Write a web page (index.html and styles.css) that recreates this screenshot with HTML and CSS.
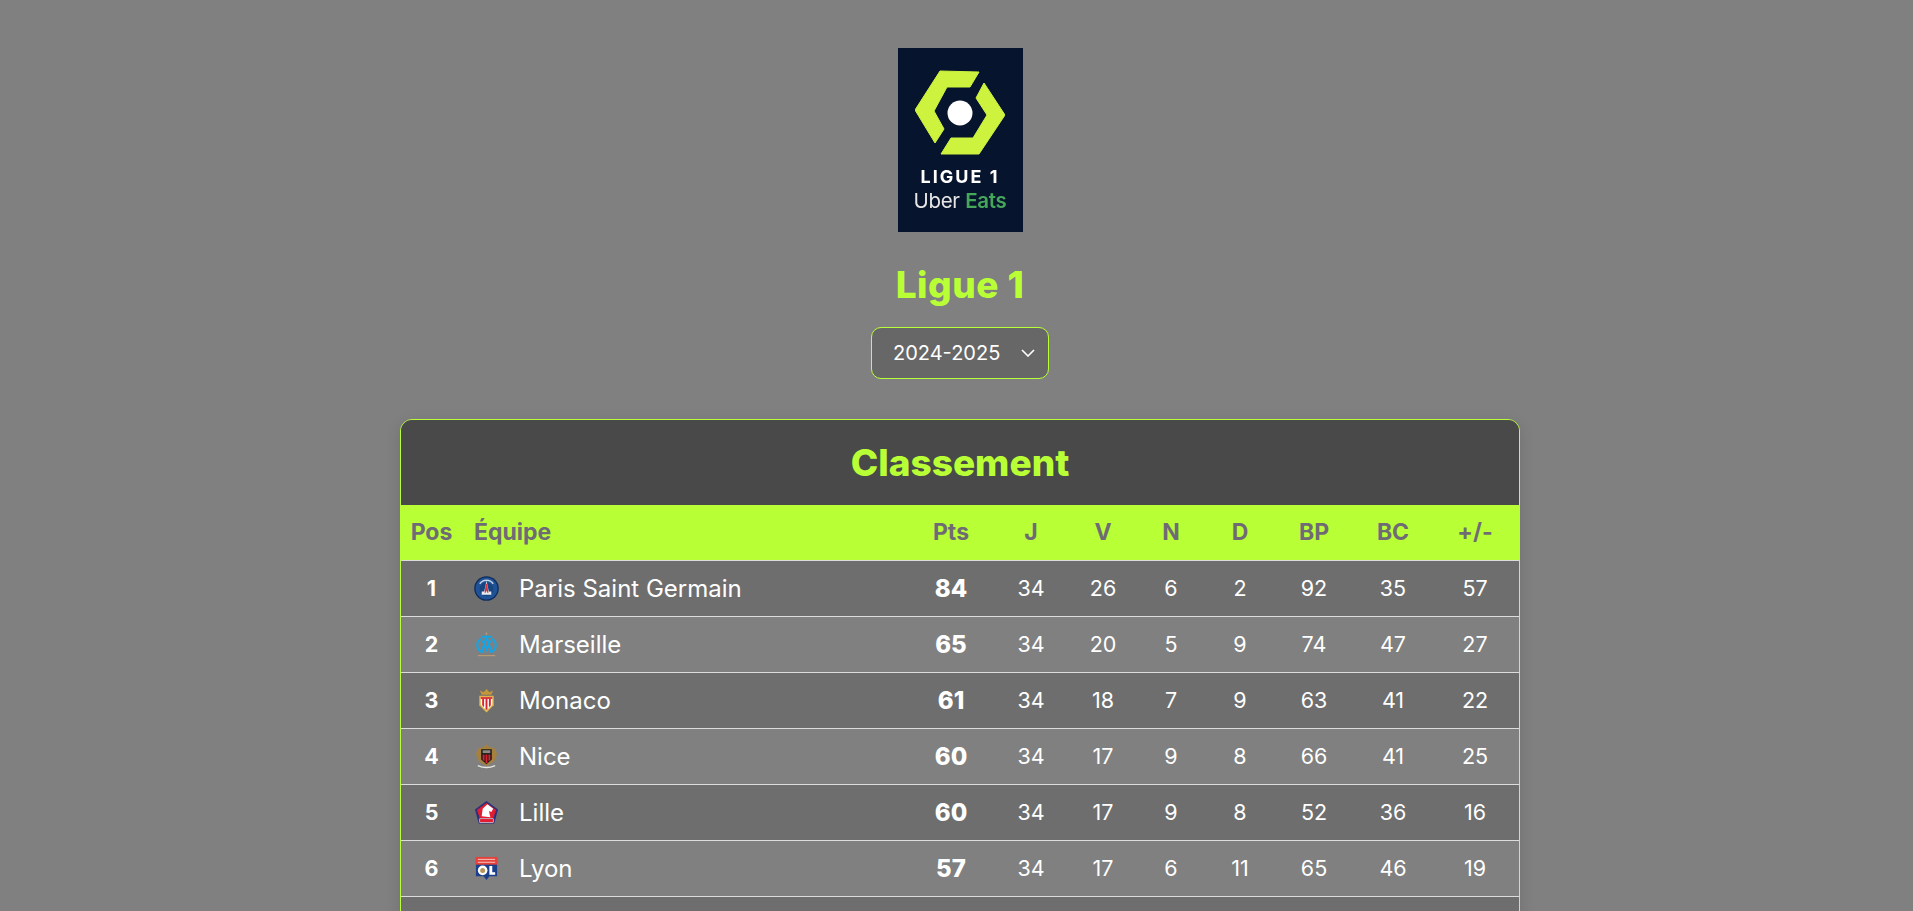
FILE: index.html
```html
<!DOCTYPE html>
<html lang="fr">
<head>
    <meta charset="UTF-8">
    <meta name="viewport" content="width=device-width, initial-scale=1.0">
    <title>Ligue 1 - Classement</title>
    <link rel="stylesheet" href="styles.css">
</head>
<body>
    <header class="league-header">
        <div class="league-logo">
            <svg class="logo-mark" viewBox="0 0 90 85" aria-hidden="true">
                <path d="M25 1 L64 2 L55 17 H32 L19 41 L29 59 L20 73 L0 40 Z" fill="#cdf33f" stroke="#cdf33f" stroke-width="1" stroke-linejoin="round"/>
                <path d="M69 13 L90 45 L64 84 H26 L36 68 H58 L72 45 L61 28 Z" fill="#cdf33f" stroke="#cdf33f" stroke-width="1" stroke-linejoin="round"/>
                <circle cx="45" cy="43" r="12.5" fill="#fff"/>
            </svg>
            <span class="logo-name">LIGUE 1</span>
            <span class="logo-sponsor">Uber <em>Eats</em></span>
        </div>
        <h1 class="league-title">Ligue 1</h1>
        <div class="season-select">
            <span>2024-2025</span>
            <svg class="chevron" viewBox="0 0 14 8" aria-hidden="true"><path d="M1 1 L7 7 L13 1" fill="none" stroke="#fff" stroke-width="1.6"/></svg>
        </div>
    </header>

    <section class="standings">
        <h2 class="standings-title">Classement</h2>
        <table>
            <thead>
                <tr>
                    <th class="col-pos">Pos</th>
                    <th class="col-team">Équipe</th>
                    <th class="col-pts">Pts</th>
                    <th class="col-j">J</th>
                    <th class="col-v">V</th>
                    <th class="col-n">N</th>
                    <th class="col-d">D</th>
                    <th class="col-bp">BP</th>
                    <th class="col-bc">BC</th>
                    <th class="col-diff">+/-</th>
                </tr>
            </thead>
            <tbody>
                <tr>
                    <td class="pos">1</td>
                    <td><div class="team">
                        <svg class="crest" viewBox="0 0 26 26" aria-hidden="true">
                            <circle cx="13" cy="13" r="12.8" fill="#0f2c5c"/>
                            <circle cx="13" cy="13" r="11.4" fill="#1f5296"/>
                            <path d="M6 8 A8.5 8.5 0 0 1 20 8" fill="none" stroke="#c4d2e4" stroke-width="1.6"/>
                            <circle cx="13" cy="14" r="7.2" fill="#17457f"/>
                            <path d="M13 5 L15.4 16 H18 V19.5 H8 V16 H10.6 Z" fill="#e6ebf2"/>
                            <path d="M12.2 8 H13.8 L15 17.5 H13.8 L13 15 L12.2 17.5 H11 Z" fill="#d8343f"/>
                        </svg>
                        <span>Paris Saint Germain</span>
                    </div></td>
                    <td class="pts">84</td><td>34</td><td>26</td><td>6</td><td>2</td><td>92</td><td>35</td><td>57</td>
                </tr>
                <tr>
                    <td class="pos">2</td>
                    <td><div class="team">
                        <svg class="crest" viewBox="0 0 26 26" aria-hidden="true">
                            <path d="M13 0.5 V3" stroke="#b89a72" stroke-width="1.4"/>
                            <path d="M8 5 H18 M13 5 L8 21 M13 5 L18 21 M3.5 14 A6.5 6.5 0 0 1 8 7 M22.5 14 A6.5 6.5 0 0 0 18 7 M3.5 14 A6.5 6.5 0 0 0 9 21 M22.5 14 A6.5 6.5 0 0 1 17 21 M9 9 L13 18 L17 9" fill="none" stroke="#12a5e8" stroke-width="2.2"/>
                            <path d="M4 24.5 H22" stroke="#b89a72" stroke-width="1.2"/>
                        </svg>
                        <span>Marseille</span>
                    </div></td>
                    <td class="pts">65</td><td>34</td><td>20</td><td>5</td><td>9</td><td>74</td><td>47</td><td>27</td>
                </tr>
                <tr>
                    <td class="pos">3</td>
                    <td><div class="team">
                        <svg class="crest" viewBox="0 0 26 26" aria-hidden="true">
                            <path d="M8 7 L6 2.5 L10 4.5 L13 1 L16 4.5 L20 2.5 L18 7 Z" fill="#c2983a"/>
                            <path d="M5.5 8 H20.5 V18 L13 25.5 L5.5 18 Z" fill="#e0b64a"/>
                            <path d="M7 9.5 H19 V17.5 L13 23.5 L7 17.5 Z" fill="#fff"/>
                            <path d="M8.5 11 H10.5 V20 L8.5 18 Z M12 11 H14 V22.5 H12 Z M15.5 11 H17.5 V18 L15.5 20 Z" fill="#d8252f"/>
                            <rect x="7" y="9.5" width="12" height="1.8" fill="#d8252f"/>
                        </svg>
                        <span>Monaco</span>
                    </div></td>
                    <td class="pts">61</td><td>34</td><td>18</td><td>7</td><td>9</td><td>63</td><td>41</td><td>22</td>
                </tr>
                <tr>
                    <td class="pos">4</td>
                    <td><div class="team">
                        <svg class="crest" viewBox="0 0 26 26" aria-hidden="true">
                            <path d="M13 0.5 L16 3 L22 5 L24 11 L21 18 L13 23 L5 18 L2 11 L4 5 L10 3 Z" fill="#a5803f"/>
                            <path d="M7.5 5.5 H18.5 V16 L13 21 L7.5 16 Z" fill="#17171a"/>
                            <path d="M9 11 H11 V18 L9 16.5 Z M12 11 H14 V20 H12 Z M15 11 H17 V16.5 L15 18 Z" fill="#d22630"/>
                            <path d="M9 6.5 H17 V9.5 H9 Z" fill="#8f8a80"/>
                            <path d="M4 22.5 Q13 26.5 22 22.5" fill="none" stroke="#e6e6de" stroke-width="1.6"/>
                        </svg>
                        <span>Nice</span>
                    </div></td>
                    <td class="pts">60</td><td>34</td><td>17</td><td>9</td><td>8</td><td>66</td><td>41</td><td>25</td>
                </tr>
                <tr>
                    <td class="pos">5</td>
                    <td><div class="team">
                        <svg class="crest" viewBox="0 0 26 26" aria-hidden="true">
                            <path d="M13 1 L25 10 L21 24.5 H5 L1 10 Z" fill="#2b2f7c"/>
                            <path d="M13 3 L23 10.5 L20 19 H6 L3 10.5 Z" fill="#e01e2f"/>
                            <path d="M8 17 L9 9 L14 4.5 L20 9 L18 12.5 L15.5 11.5 L17 18 Z" fill="#fff"/>
                            <rect x="6" y="19.5" width="14" height="3.8" fill="#e01e2f" stroke="#fff" stroke-width=".6"/>
                        </svg>
                        <span>Lille</span>
                    </div></td>
                    <td class="pts">60</td><td>34</td><td>17</td><td>9</td><td>8</td><td>52</td><td>36</td><td>16</td>
                </tr>
                <tr>
                    <td class="pos">6</td>
                    <td><div class="team">
                        <svg class="crest" viewBox="0 0 26 26" aria-hidden="true">
                            <path d="M2 1 H24 V21 H16 L13 25 L10 21 H2 Z" fill="#1c3f8c"/>
                            <rect x="2" y="1" width="22" height="8" fill="#e5403a"/>
                            <path d="M4 3.5 H22 M4 6.5 H22" stroke="#f3c9c4" stroke-width="1"/>
                            <circle cx="9" cy="15" r="5" fill="#fff"/>
                            <circle cx="9" cy="15" r="2.6" fill="#b8965a"/>
                            <path d="M16 10.5 H19 V17 H22 V19.5 H16 Z" fill="#fff"/>
                        </svg>
                        <span>Lyon</span>
                    </div></td>
                    <td class="pts">57</td><td>34</td><td>17</td><td>6</td><td>11</td><td>65</td><td>46</td><td>19</td>
                </tr>
                <tr>
                    <td class="pos"></td><td></td><td></td><td></td><td></td><td></td><td></td><td></td><td></td><td></td>
                </tr>
            </tbody>
        </table>
    </section>
</body>
</html>
```

FILE: styles.css
```css
* {
    box-sizing: border-box;
}
html, body {
    height: 911px;
    overflow: hidden;
}
body {
    font-family: Inter, 'Noto Sans', sans-serif;
    margin: 0;
    padding: 48px 0 0 7px;
    background-color: #808080;
    color: #fff;
}
.league-header {
    display: flex;
    flex-direction: column;
    align-items: center;
}
.league-logo {
    width: 125px;
    height: 184px;
    background-color: #07142d;
    display: flex;
    flex-direction: column;
    align-items: center;
    padding-top: 22px;
    filter: blur(0.4px);
}
.logo-mark {
    width: 90px;
    height: 85px;
    flex-shrink: 0;
}
.logo-name {
    font-weight: 700;
    font-size: 18px;
    line-height: 22px;
    letter-spacing: 2px;
    margin-top: 11px;
}
.logo-sponsor {
    font-size: 20.5px;
    line-height: 24px;
    letter-spacing: -0.3px;
    margin-top: 1px;
    color: #e6e6e6;
}
.logo-sponsor em {
    font-style: normal;
    font-weight: 600;
    color: #45a75a;
}
.league-title {
    font-size: 37px;
    font-weight: 800;
    line-height: 44px;
    letter-spacing: 0.5px;
    color: #b9ff36;
    margin: 31px 0 20px;
}
.season-select {
    width: 178px;
    height: 52px;
    display: flex;
    align-items: center;
    justify-content: space-between;
    padding: 0 13px 0 21px;
    font-size: 20px;
    background-color: #676767;
    border: 1px solid #b9ff36;
    border-radius: 10px;
}
.chevron {
    width: 14px;
    height: 8px;
}
.standings {
    width: 1120px;
    margin: 40px auto 0;
    border: 1px solid #b9ff36;
    border-radius: 12px;
    overflow: hidden;
    box-shadow: 0 4px 16px rgba(0, 0, 0, 0.12);
}
.standings-title {
    margin: 0;
    height: 85px;
    line-height: 85px;
    text-align: center;
    font-size: 37px;
    font-weight: 800;
    color: #b9ff36;
    background-color: #494949;
}
table {
    width: 100%;
    border-collapse: collapse;
    table-layout: fixed;
}
th {
    height: 55px;
    font-size: 23px;
    font-weight: 700;
    color: #6f6b75;
    background-color: #b9ff36;
    text-align: center;
    padding: 0;
}
th.col-team {
    text-align: left;
    padding-left: 12px;
}
.col-pos { width: 61px; }
.col-pts { width: 80px; }
.col-j { width: 80px; }
.col-v { width: 64px; }
.col-n { width: 72px; }
.col-d { width: 66px; }
.col-bp { width: 82px; }
.col-bc { width: 76px; }
.col-diff { width: 88px; }
td {
    height: 56px;
    padding: 0;
    font-size: 21.5px;
    text-align: center;
    border-top: 1px solid #dcdcdc;
}
tbody tr:nth-child(odd) {
    background-color: #6e6e6e;
}
td.pos {
    font-weight: 700;
}
td.pts {
    font-size: 24px;
    font-weight: 800;
}
.team {
    display: flex;
    align-items: center;
    gap: 20px;
    padding-left: 12px;
    font-size: 24px;
    text-align: left;
}
.crest {
    width: 25px;
    height: 25px;
    flex-shrink: 0;
}
```
